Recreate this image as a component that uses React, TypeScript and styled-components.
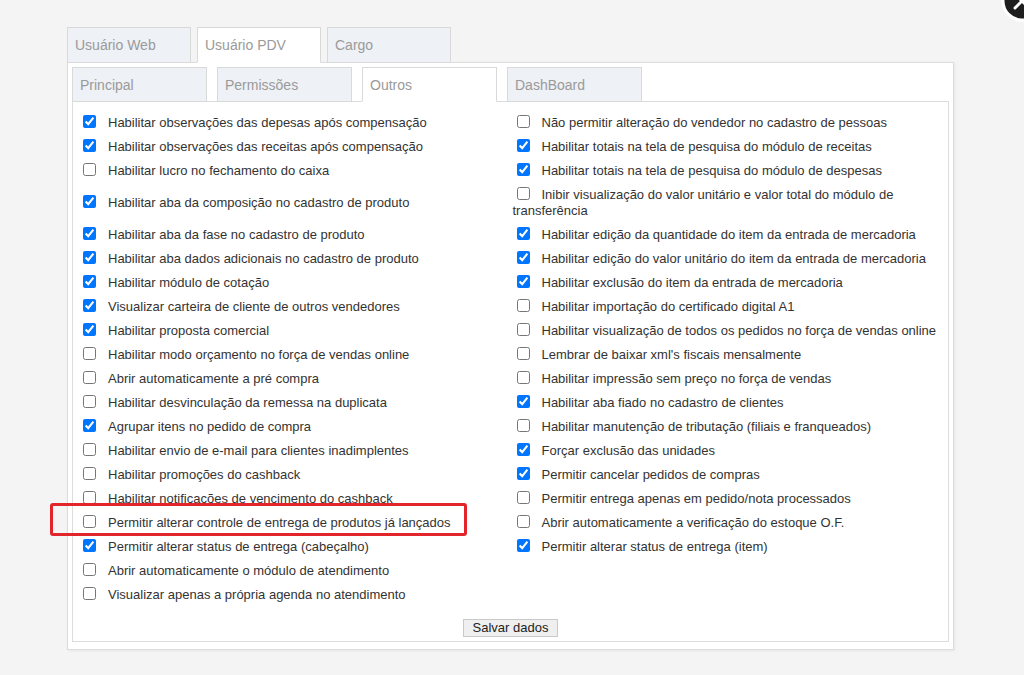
import styled, { createGlobalStyle } from 'styled-components';

const GlobalStyle = createGlobalStyle`
  html, body {
    margin: 0;
    padding: 0;
    background: #f4f4f4;
  }
  body {
    font-family: "Liberation Sans", Arial, sans-serif;
  }
`;

type Option = { label: string; checked: boolean; highlight?: boolean };

const leftOptions: Option[] = [
  { label: 'Habilitar observações das depesas após compensação', checked: true },
  { label: 'Habilitar observações das receitas após compensação', checked: true },
  { label: 'Habilitar lucro no fechamento do caixa', checked: false },
  { label: 'Habilitar aba da composição no cadastro de produto', checked: true },
  { label: 'Habilitar aba da fase no cadastro de produto', checked: true },
  { label: 'Habilitar aba dados adicionais no cadastro de produto', checked: true },
  { label: 'Habilitar módulo de cotação', checked: true },
  { label: 'Visualizar carteira de cliente de outros vendedores', checked: true },
  { label: 'Habilitar proposta comercial', checked: true },
  { label: 'Habilitar modo orçamento no força de vendas online', checked: false },
  { label: 'Abrir automaticamente a pré compra', checked: false },
  { label: 'Habilitar desvinculação da remessa na duplicata', checked: false },
  { label: 'Agrupar itens no pedido de compra', checked: true },
  { label: 'Habilitar envio de e-mail para clientes inadimplentes', checked: false },
  { label: 'Habilitar promoções do cashback', checked: false },
  { label: 'Habilitar notificações de vencimento do cashback', checked: false },
  { label: 'Permitir alterar controle de entrega de produtos já lançados', checked: false, highlight: true },
  { label: 'Permitir alterar status de entrega (cabeçalho)', checked: true },
  { label: 'Abrir automaticamente o módulo de atendimento', checked: false },
  { label: 'Visualizar apenas a própria agenda no atendimento', checked: false },
];

const rightOptions: Option[] = [
  { label: 'Não permitir alteração do vendedor no cadastro de pessoas', checked: false },
  { label: 'Habilitar totais na tela de pesquisa do módulo de receitas', checked: true },
  { label: 'Habilitar totais na tela de pesquisa do módulo de despesas', checked: true },
  { label: 'Inibir visualização do valor unitário e valor total do módulo de transferência', checked: false },
  { label: 'Habilitar edição da quantidade do item da entrada de mercadoria', checked: true },
  { label: 'Habilitar edição do valor unitário do item da entrada de mercadoria', checked: true },
  { label: 'Habilitar exclusão do item da entrada de mercadoria', checked: true },
  { label: 'Habilitar importação do certificado digital A1', checked: false },
  { label: 'Habilitar visualização de todos os pedidos no força de vendas online', checked: false },
  { label: "Lembrar de baixar xml's fiscais mensalmente", checked: false },
  { label: 'Habilitar impressão sem preço no força de vendas', checked: false },
  { label: 'Habilitar aba fiado no cadastro de clientes', checked: true },
  { label: 'Habilitar manutenção de tributação (filiais e franqueados)', checked: false },
  { label: 'Forçar exclusão das unidades', checked: true },
  { label: 'Permitir cancelar pedidos de compras', checked: true },
  { label: 'Permitir entrega apenas em pedido/nota processados', checked: false },
  { label: 'Abrir automaticamente a verificação do estoque O.F.', checked: false },
  { label: 'Permitir alterar status de entrega (item)', checked: true },
];

const StyledPage = styled.div`
  position: relative;
  width: 1024px;
  height: 675px;
  overflow: hidden;
  box-sizing: border-box;
  padding: 27px 0 0 67px;
`;

const StyledFrame = styled.div`
  width: 887px;
`;

const StyledTabBar = styled.div<{ $gap: number }>`
  display: flex;
  column-gap: ${(p) => p.$gap}px;
  position: relative;
  z-index: 1;
  margin-bottom: -1px;
`;

const StyledTab = styled.div<{ $active?: boolean; $width: number; $height: number }>`
  box-sizing: border-box;
  width: ${(p) => p.$width}px;
  height: ${(p) => p.$height}px;
  display: flex;
  align-items: center;
  padding-left: 7px;
  border: 1px solid #d9d9d9;
  border-bottom-color: ${(p) => (p.$active ? '#fff' : '#d9d9d9')};
  background: ${(p) => (p.$active ? '#fff' : '#eef1f6')};
  color: #9a9a9a;
  font-size: 14px;
`;

const StyledOuterPanel = styled.div`
  background: #fff;
  border: 1px solid #dcdcdc;
  box-shadow: 1px 1px 3px rgba(0, 0, 0, 0.06);
  padding: 4px 4px 7px 4px;
`;

const StyledInnerPanel = styled.div`
  border: 1px solid #dcdcdc;
  padding: 8px 6px 4px 6px;
`;

const StyledTable = styled.table`
  width: 100%;
  border-collapse: collapse;
  table-layout: fixed;
`;

const StyledCell = styled.td<{ $right?: boolean }>`
  width: 50%;
  height: 24px;
  box-sizing: border-box;
  padding: 5px 0 3px ${(p) => (p.$right ? 2 : 0)}px;
  vertical-align: middle;
  font-size: 13px;
  line-height: 16px;
  color: #333;
`;

const StyledOption = styled.div`
  position: relative;
`;

const StyledCheckbox = styled.input`
  width: 13px;
  height: 13px;
  margin: 0 3px 0 4px;
  vertical-align: -1px;
`;

const StyledLabel = styled.span`
  margin-left: 9px;
`;

const StyledHighlight = styled.span`
  position: absolute;
  top: -12px;
  left: -29px;
  width: 417px;
  height: 33px;
  box-sizing: border-box;
  border: 3px solid #e2252b;
  border-radius: 3px;
  pointer-events: none;
`;

const StyledFooter = styled.div`
  text-align: center;
  margin-top: 12px;
`;

const StyledButton = styled.button`
  font-family: "Liberation Sans", Arial, sans-serif;
  font-size: 13px;
  color: #222;
  height: 18px;
  padding: 0 9px;
  border: 1px solid #c9c9c9;
  background: #efefef;
  line-height: 16px;
`;

const StyledClose = styled.div`
  position: absolute;
  top: -20px;
  right: -19px;
  width: 42px;
  height: 42px;
`;

function OptionCell({ option, right }: { option?: Option; right?: boolean }) {
  if (!option) return <StyledCell $right={right} />;
  return (
    <StyledCell $right={right}>
      <StyledOption>
        <StyledCheckbox type="checkbox" defaultChecked={option.checked} />
        <StyledLabel>{option.label}</StyledLabel>
        {option.highlight && <StyledHighlight />}
      </StyledOption>
    </StyledCell>
  );
}

function App() {
  const rows = leftOptions.map((left, i) => [left, rightOptions[i]] as const);
  return (
    <>
      <GlobalStyle />
      <StyledPage>
        <StyledClose>
          <svg width="42" height="42" viewBox="0 0 42 42">
            <circle cx="21" cy="21" r="19" fill="#1e1e1e" stroke="#fff" strokeWidth="3" />
            <path d="M14 14 L28 28 M28 14 L14 28" stroke="#fff" strokeWidth="3" strokeLinecap="round" />
          </svg>
        </StyledClose>
        <StyledFrame>
          <StyledTabBar $gap={6}>
            <StyledTab $width={124} $height={36}>Usuário Web</StyledTab>
            <StyledTab $width={124} $height={36} $active>Usuário PDV</StyledTab>
            <StyledTab $width={124} $height={36}>Cargo</StyledTab>
          </StyledTabBar>
          <StyledOuterPanel>
            <StyledTabBar $gap={10}>
              <StyledTab $width={135} $height={35}>Principal</StyledTab>
              <StyledTab $width={135} $height={35}>Permissões</StyledTab>
              <StyledTab $width={135} $height={35} $active>Outros</StyledTab>
              <StyledTab $width={135} $height={35}>DashBoard</StyledTab>
            </StyledTabBar>
            <StyledInnerPanel>
              <StyledTable>
                <tbody>
                  {rows.map(([left, right], i) => (
                    <tr key={i}>
                      <OptionCell option={left} />
                      <OptionCell option={right} right />
                    </tr>
                  ))}
                </tbody>
              </StyledTable>
              <StyledFooter>
                <StyledButton type="button">Salvar dados</StyledButton>
              </StyledFooter>
            </StyledInnerPanel>
          </StyledOuterPanel>
        </StyledFrame>
      </StyledPage>
    </>
  );
}

export default App;
